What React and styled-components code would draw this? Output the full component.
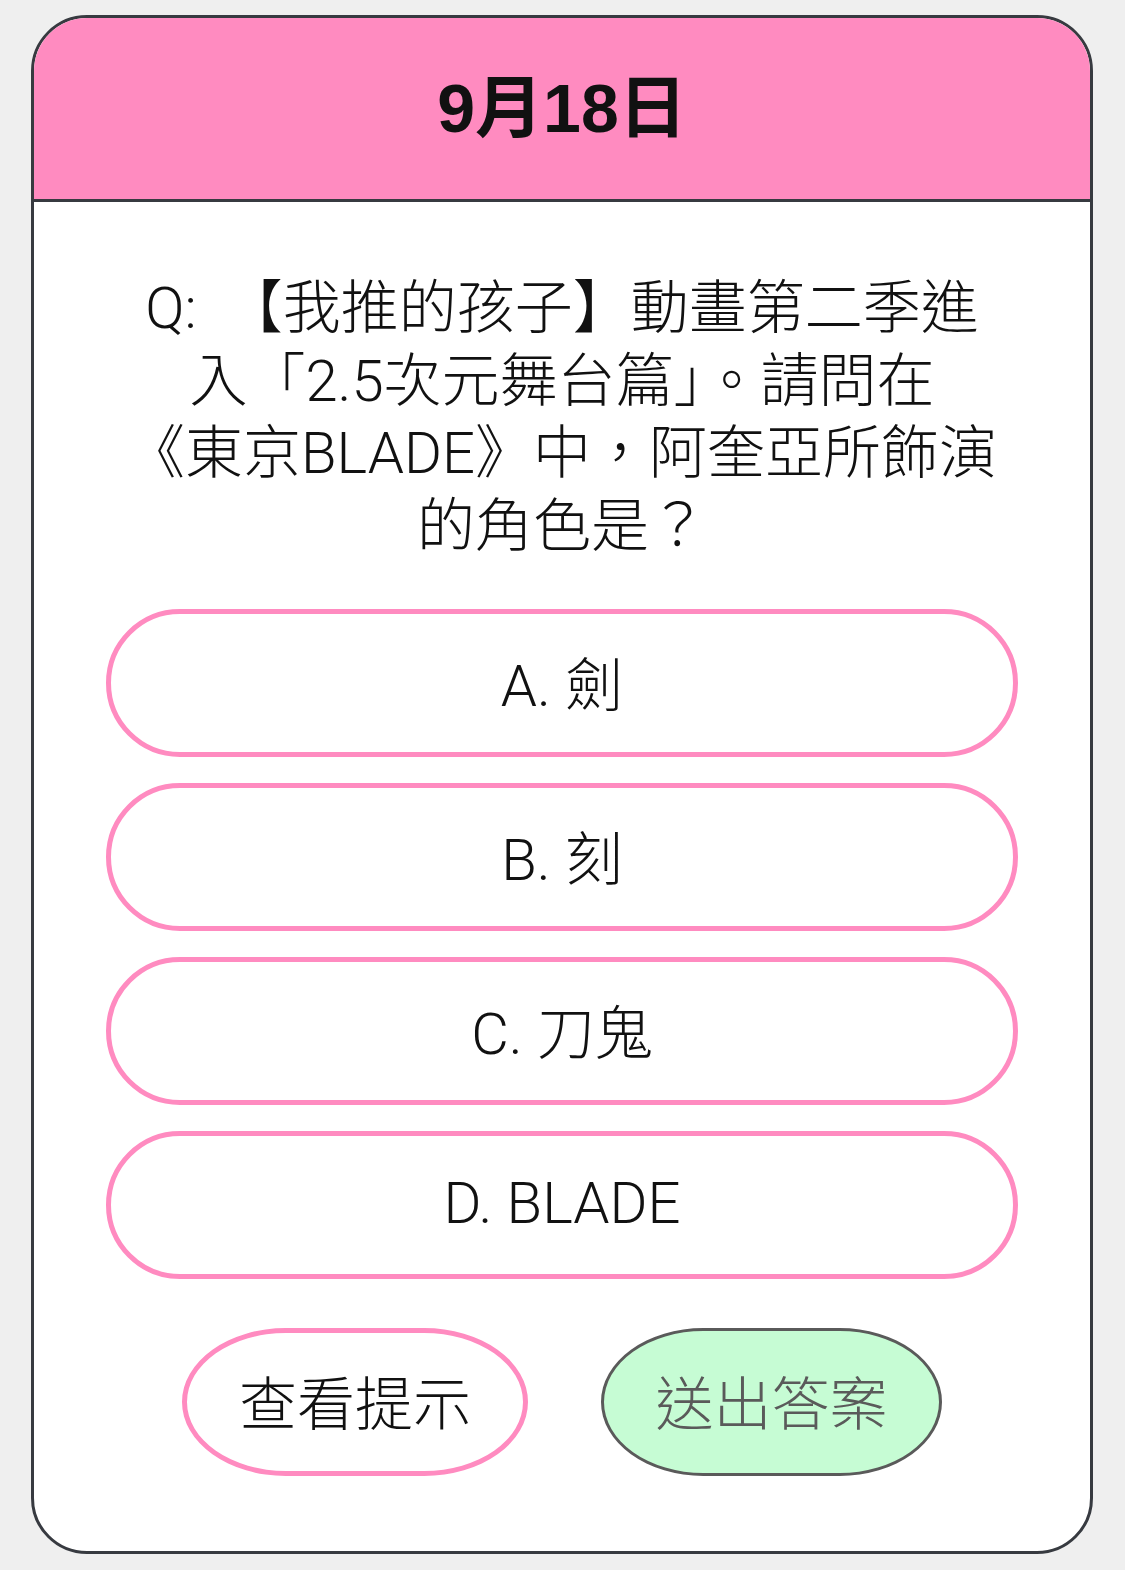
import React, { useState } from 'react';
import styled, { createGlobalStyle } from 'styled-components';

const GlobalStyle = createGlobalStyle`
  body {
    margin: 0;
    background: #efefef;
    font-family: Roboto, "Noto Sans CJK TC", "Noto Sans", sans-serif;
  }
`;

const Page = styled.div`
  padding: 15px 32px 17px 31px;
`;

const Card = styled.div`
  width: 1062px;
  box-sizing: border-box;
  border: 3px solid #373a40;
  border-radius: 56px;
  background: #fff;
  overflow: hidden;
`;

const Header = styled.div`
  height: 184px;
  padding-bottom: 12px;
  box-sizing: border-box;
  background: #ff8bc0;
  border-bottom: 3px solid #373a40;
  display: flex;
  align-items: center;
  justify-content: center;
`;

const Title = styled.h1`
  margin: 0;
  font-family: "Liberation Sans", "Noto Sans CJK TC", sans-serif;
  font-size: 68px;
  font-weight: 700;
  color: #111;
`;

const Body = styled.div`
  display: flex;
  flex-direction: column;
  align-items: center;
  padding: 70px 0 75px;
`;

const Question = styled.p`
  margin: 0 0 47px;
  width: 940px;
  text-align: center;
  font-size: 58px;
  line-height: 72.5px;
  font-weight: 300;
  color: #111;
`;

const Options = styled.div`
  display: flex;
  flex-direction: column;
  gap: 26px;
  width: 912px;
`;

const Option = styled.button`
  height: 148px;
  box-sizing: border-box;
  border: 5px solid ${p => (p.$selected ? '#e05a9c' : '#ff8bc0')};
  border-radius: 74px;
  background: ${p => (p.$selected ? '#ffe3f0' : '#fff')};
  font-family: inherit;
  font-size: 58px;
  font-weight: 300;
  color: #111;
  padding: 0 0 4px;
  cursor: pointer;
`;

const Actions = styled.div`
  display: flex;
  gap: 73px;
  margin-top: 49px;
`;

const ActionButton = styled.button`
  height: 148px;
  width: ${p => p.$width}px;
  box-sizing: border-box;
  border: ${p => (p.$primary ? '3px solid #5a5a5a' : '5px solid #ff8bc0')};
  background: ${p => (p.$primary ? '#c6fcd4' : '#fff')};
  color: ${p => (p.$primary ? '#5a5a5a' : '#111')};
  border-radius: 30% / 50%;
  font-family: inherit;
  font-size: 58px;
  font-weight: 300;
  padding: 0 0 4px;
  cursor: pointer;
`;

const options = ['A. 劍', 'B. 刻', 'C. 刀鬼', 'D. BLADE'];

export default function App() {
  const [picked, setPicked] = useState(null);

  return (
    <Page>
      <GlobalStyle />
      <Card>
        <Header>
          <Title>9月18日</Title>
        </Header>
        <Body>
          <Question>
            Q:&nbsp; 【我推的孩子】動畫第二季進<br />
            入「2.5次元舞台篇」。請問在<br />
            《東京BLADE》中，阿奎亞所飾演<br />
            的角色是？
          </Question>
          <Options>
            {options.map((o, i) => (
              <Option key={o} $selected={picked === i} onClick={() => setPicked(i)}>
                {o}
              </Option>
            ))}
          </Options>
          <Actions>
            <ActionButton $width={346}>查看提示</ActionButton>
            <ActionButton $width={341} $primary>送出答案</ActionButton>
          </Actions>
        </Body>
      </Card>
    </Page>
  );
}
